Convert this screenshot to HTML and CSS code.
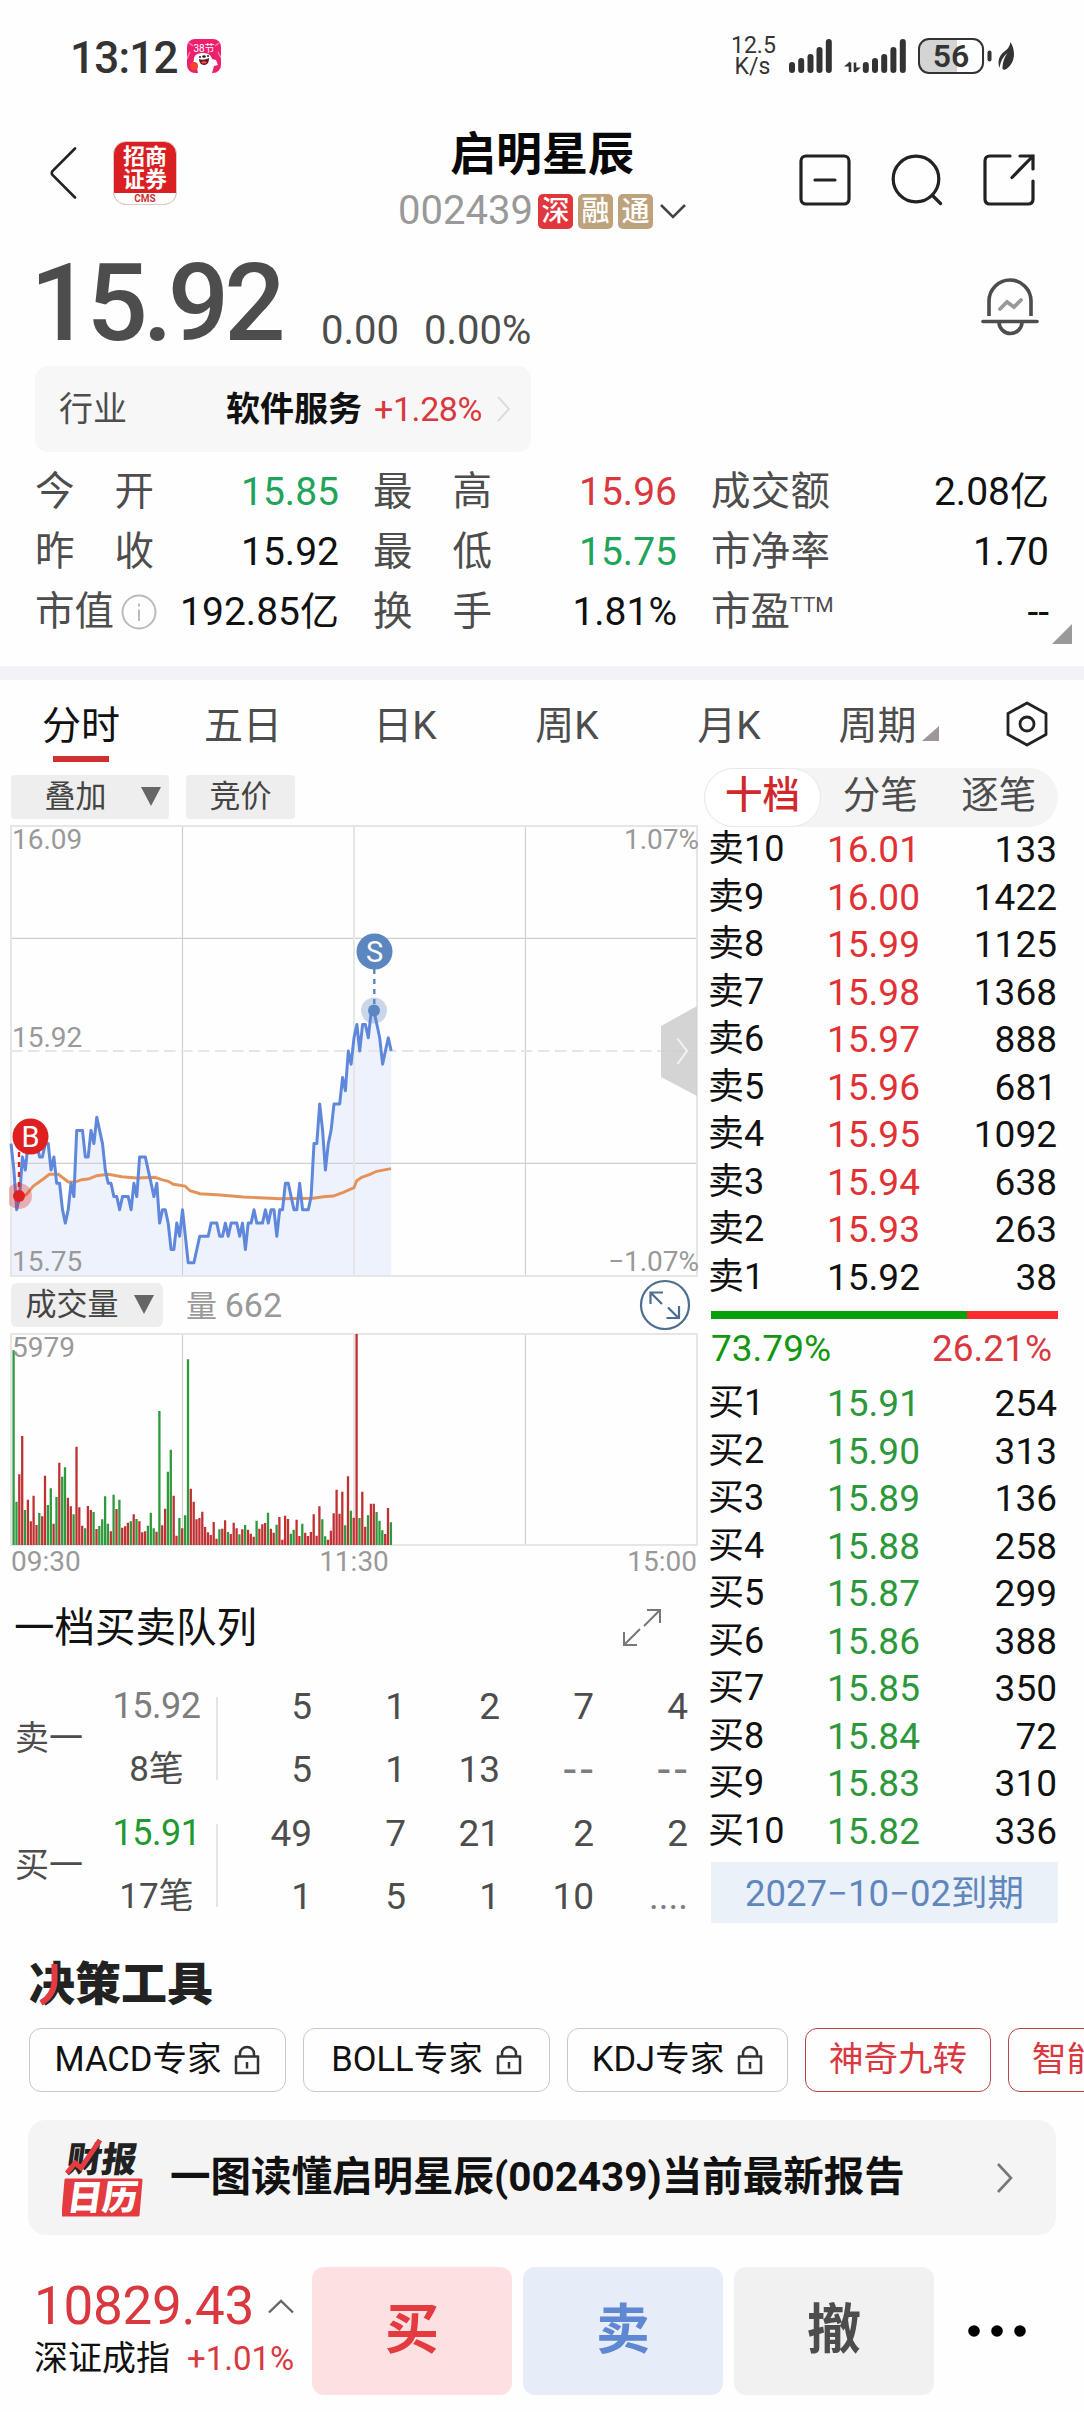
FILE: index.html
```html
<!DOCTYPE html>
<html lang="zh-CN">
<head>
<meta charset="utf-8">
<title>启明星辰 002439</title>
<link rel="stylesheet" href="styles.css">
</head>
<body>
<div class="status">
  <span class="clock">13:12</span>
  <svg class="promo" width="34" height="34" viewBox="0 0 34 34">
    <rect width="34" height="34" rx="8" fill="#ef1f6e"/>
    <path d="M3 13L0 20M31 13l3 6M2 4l4 3M32 4l-4 3" stroke="#ff7fae" stroke-width="1.5"/>
    <text x="17" y="13" text-anchor="middle" font-size="10" fill="#fff">38节</text>
    <path d="M7 20c0-4 4-6 9-6s8 2 9 6l4 1 2 5-4 1-2 7H11l-1-5-4-4z" fill="#fff"/>
    <path d="M12 20c3 1 6 1 10-1 0 5-2 7-5 7s-5-3-5-6z" fill="#6d1420"/>
    <path d="M14 23c2-1 4-1 6 0-1 2-5 2-6 0z" fill="#f4504f"/>
    <circle cx="13" cy="18" r="1" fill="#222"/><ellipse cx="17" cy="17.500" rx="1.800" ry="1.200" fill="#222"/><circle cx="21" cy="17" r="1" fill="#222"/>
    <circle cx="7" cy="27" r="4" fill="#f2452f"/>
  </svg>
  <div class="status-right">
    <div class="speed">12.5<br>K/s</div>
    <svg class="signals" width="118" height="36" viewBox="0 0 118 36">
      <g stroke="#333" stroke-width="6" stroke-linecap="round">
        <path d="M3 27v5M12.200 23v9M21.500 19v13M30.500 12v20M39.800 4v28"/>
        <path d="M76.800 27v5M86 23v9M95.200 19v13M104.400 12v20M113.800 4v28"/>
      </g>
      <path d="M61 24.500v9.500M66 24.500v9.500" stroke="#333" stroke-width="2.600"/>
      <path d="M55 28.500l6-5v5zM72 29.500l-6 5v-5z" fill="#333"/>
    </svg>
    <div class="battery"><span>56</span></div>
    <svg class="nub" width="28" height="30" viewBox="0 0 28 30">
      <path d="M2.500 11.500v7" stroke="#333" stroke-width="4" stroke-linecap="round"/>
      <path d="M23.500 1c6 10 4 21-4 27-2 1-3 1-4 0 0-7 2-12 5-16-5 4-7 9-8 15-2-5-1-11 3-15 4-3 7-5 8-11z" fill="#333"/>
    </svg>
  </div>
</div>

<header class="top">
  <div class="top-side">
    <svg class="back" width="27" height="52" viewBox="0 0 27 52"><path d="M25 1.500L2.500 24q-1.500 2 0 4L25 50.500" fill="none" stroke="#222" stroke-width="2.600" stroke-linecap="round"/></svg>
    <div class="broker"><div class="broker-name">招商<br>证券</div><div class="broker-code">CMS</div></div>
  </div>
  <div class="top-title">
    <h1>启明星辰</h1>
    <div class="code"><span>002439</span><i class="tag tag-red">深</i><i class="tag">融</i><i class="tag">通</i>
      <svg width="26" height="16" viewBox="0 0 26 16"><path d="M1 2l12 12L25 2" fill="none" stroke="#444" stroke-width="2.500"/></svg>
    </div>
  </div>
  <div class="top-actions">
    <svg width="52" height="52" viewBox="0 0 52 52" fill="none" stroke="#222" stroke-width="3.200" stroke-linecap="round"><rect x="2" y="2" width="48" height="48" rx="5"/><path d="M16 26h20"/></svg>
    <svg width="52" height="52" viewBox="0 0 52 52" fill="none" stroke="#222" stroke-width="3.200" stroke-linecap="round"><circle cx="25" cy="25" r="22.800"/><path d="M41.500 41.500l8 8"/></svg>
    <svg width="52" height="52" viewBox="0 0 52 52" fill="none" stroke="#222" stroke-width="3.200" stroke-linecap="round"><path d="M27 2H7Q2 2 2 7v38q0 5 5 5h38q5 0 5-5V27M37 2h13v13M50 2L29 23.500"/></svg>
  </div>
</header>

<section class="quote">
  <span class="price">15.92</span><span class="chg">0.00</span><span class="chg">0.00%</span>
  <svg class="bell" width="58" height="58" viewBox="0 0 58 58" fill="none" stroke="#4d4d4d" stroke-width="3.600">
    <path d="M8 38V23a21 21 0 0 1 42 0v15"/><path d="M2 43.500h54" stroke-linecap="round"/><path d="M18 44a11.500 11.500 0 0 0 23 0"/><path d="M19 31l7-7 7 5 7-7" stroke="#999" stroke-width="3.800" stroke-linecap="round"/>
  </svg>
</section>

<section class="industry">
  <span class="ind-label">行业</span><b>软件服务</b><span class="red ind-chg">+1.28%</span>
  <svg width="14" height="26" viewBox="0 0 14 26"><path d="M1 1l11 12L1 25" fill="none" stroke="#ddd" stroke-width="2"/></svg>
</section>

<section class="stats">
  <div><span class="lab"><i>今</i><i>开</i></span><span class="green">15.85</span></div>
  <div><span class="lab"><i>最</i><i>高</i></span><span class="red">15.96</span></div>
  <div><span class="lab"><i>成</i><i>交</i><i>额</i></span><span>2.08亿</span></div>
  <div><span class="lab"><i>昨</i><i>收</i></span><span>15.92</span></div>
  <div><span class="lab"><i>最</i><i>低</i></span><span class="green">15.75</span></div>
  <div><span class="lab"><i>市</i><i>净</i><i>率</i></span><span>1.70</span></div>
  <div><span class="lab cap"><i>市值</i><svg width="36" height="36" viewBox="0 0 36 36" fill="none" stroke="#bbb" stroke-width="2"><circle cx="18" cy="18" r="16.500"/><path d="M18 15.500V27M18 9.500v3"/></svg></span><span>192.85亿</span></div>
  <div><span class="lab"><i>换</i><i>手</i></span><span>1.81%</span></div>
  <div><span class="lab"><i>市盈<sup>TTM</sup></i></span><span>--</span></div>
  <svg class="corner" width="20" height="20" viewBox="0 0 20 20"><path d="M20 0v20H0z" fill="#999"/></svg>
</section>

<nav class="tabs">
  <a class="on">分时</a><a>五日</a><a>日K</a><a>周K</a><a>月K</a>
  <a class="period">周期<svg width="17" height="17" viewBox="0 0 17 17"><path d="M17 1v15H0z" fill="#9f9797"/></svg></a>
  <svg class="gear" width="42" height="46" viewBox="0 0 42 46" fill="none" stroke="#222" stroke-width="2.800" stroke-linejoin="round"><path d="M21 2l19 10.500v21L21 44 2 33.500v-21z"/><circle cx="21" cy="23" r="7"/></svg>
</nav>

<main class="market">
  <div class="charts">
    <div class="tools">
      <button class="wide">叠加<svg width="20" height="20" viewBox="0 0 20 20"><path d="M0 0h20L10 19z" fill="#666"/></svg></button>
      <button>竞价</button>
    </div>
    <svg class="chart" width="693" height="454" viewBox="9 824 693 454">
      <path id="area" fill="#eef2fd"/>
      <g fill="none" stroke="#cfcfcf" stroke-width="1.200"><path d="M11 938.300H697M11 1163.300H697M182.500 826V1276M525.500 826V1276"/></g>
      <g fill="none" stroke="#e6e6e6" stroke-width="2"><rect x="11" y="826" width="686" height="450"/><path d="M354 826V1276"/><path d="M11 1051H697" stroke-dasharray="11.500 5.500"/></g>
      <g class="axis"><text x="12" y="849">16.09</text><text x="12" y="1047">15.92</text><text x="12" y="1271">15.75</text><text x="699" y="849" text-anchor="end">1.07%</text><text x="699" y="1271" text-anchor="end">−1.07%</text></g>
      <path d="M19 1196.300L26 1195l7.300-9 10-7 6-4.700h9l10 7.700h6.700l6.700-2.300 6.600-.7 8.400-3.300 11.600-1.400 13.400 2.400 15 1.300 18.300-.7 6.700 2.400 6.600 1.600 5 3 11.700 1.700 5 4.700 10 3 20 1.300 23.300 2 36.700 1.700 33.300-.4 10-1.600 10-.7 10-3.700 10.700-4.600 2.700-7 5-3.400 8.300-3 6.700-3 14.300-2.700" fill="none" stroke="#e3935a" stroke-width="2.900"/>
      <path id="line" fill="none" stroke="#5f87dc" stroke-width="3" stroke-linejoin="round"/>
      <path d="M374.300 969v35" stroke="#5b86bf" stroke-width="2.400" stroke-dasharray="5 5"/>
      <circle cx="374" cy="1010.500" r="13" fill="#5b86bf" opacity=".32"/><circle cx="374" cy="1010.500" r="6" fill="#5b86bf"/>
      <circle cx="374.500" cy="951.500" r="18" fill="#5b86bf"/><text class="mark" x="374.500" y="961.500">S</text>
      <path d="M19 1152v38" stroke="#de2021" stroke-width="2.400" stroke-dasharray="5 5"/>
      <circle cx="19" cy="1196" r="13" fill="#de2021" opacity=".32"/><circle cx="19" cy="1196" r="6" fill="#de2021"/>
      <circle cx="30.500" cy="1136.500" r="18" fill="#de2021"/><text class="mark" x="30.500" y="1146.500">B</text>
      <path d="M697 1006v90l-36-19v-51z" fill="#cdcdcd" opacity=".85"/><path d="M677.500 1038.500l9.500 12.500-9.500 13" fill="none" stroke="#f3f3f3" stroke-width="2"/>
    </svg>
    <div class="volhead">
      <button class="vol">成交量<svg width="20" height="20" viewBox="0 0 20 20"><path d="M0 0h20L10 19z" fill="#666"/></svg></button>
      <span>量 <em>662</em></span>
      <svg class="full" width="52" height="52" viewBox="0 0 52 52" fill="none" stroke="#4c6d8f" stroke-width="2.200"><circle cx="26" cy="26" r="24"/><path d="M11.500 25V13.500H24M12 14l11 11M40 27v12H27.500M29 28.500l10.500 10.500"/></svg>
    </div>
    <svg class="chart" width="693" height="216" viewBox="9 1332 693 216">
      <g fill="none" stroke="#cfcfcf" stroke-width="1.200"><path d="M182.500 1334V1545M525.500 1334V1545"/></g>
      <g fill="none" stroke="#e6e6e6" stroke-width="2"><rect x="11" y="1334" width="686" height="211"/><path d="M354 1334V1545"/></g>
      <path id="up" stroke="#c13134" stroke-width="2.300"/><path id="down" stroke="#2f9a3c" stroke-width="2.300"/>
      <g class="axis"><text x="12" y="1357">5979</text></g>
    </svg>
    <div class="times"><span>09:30</span><span>11:30</span><span>15:00</span></div>
    <div class="queue-head"><span>一档买卖队列</span><svg width="40" height="40" viewBox="0 0 40 40" fill="none" stroke="#777" stroke-width="2"><path d="M25 2h13v13M38 2L22 18M2 24v13h13M2 37l16-16"/></svg></div>
    <div class="queue">
      <div class="qname">卖一</div><div class="qp"><span class="gray">15.92</span><span>8笔</span></div>
      <div class="qv"><span>5</span><span>1</span><span>2</span><span>7</span><span>4</span><span>5</span><span>1</span><span>13</span><span class="gray dash">--</span><span class="gray dash">--</span></div>
    </div>
    <div class="queue">
      <div class="qname">买一</div><div class="qp"><span class="g2">15.91</span><span>17笔</span></div>
      <div class="qv"><span>49</span><span>7</span><span>21</span><span>2</span><span>2</span><span>1</span><span>5</span><span>1</span><span>10</span><span class="gray">....</span></div>
    </div>
  </div>

  <aside class="book">
    <div class="pill"><span class="sel">十档</span><span>分笔</span><span>逐笔</span></div>
    <div class="rows sell">
      <div><span>卖10</span><span>16.01</span><span>133</span></div>
      <div><span>卖9</span><span>16.00</span><span>1422</span></div>
      <div><span>卖8</span><span>15.99</span><span>1125</span></div>
      <div><span>卖7</span><span>15.98</span><span>1368</span></div>
      <div><span>卖6</span><span>15.97</span><span>888</span></div>
      <div><span>卖5</span><span>15.96</span><span>681</span></div>
      <div><span>卖4</span><span>15.95</span><span>1092</span></div>
      <div><span>卖3</span><span>15.94</span><span>638</span></div>
      <div><span>卖2</span><span>15.93</span><span>263</span></div>
      <div class="flat"><span>卖1</span><span>15.92</span><span>38</span></div>
    </div>
    <div class="ratio"><i style="width:73.79%"></i></div>
    <div class="pct"><span>73.79%</span><span class="red">26.21%</span></div>
    <div class="rows buy">
      <div><span>买1</span><span>15.91</span><span>254</span></div>
      <div><span>买2</span><span>15.90</span><span>313</span></div>
      <div><span>买3</span><span>15.89</span><span>136</span></div>
      <div><span>买4</span><span>15.88</span><span>258</span></div>
      <div><span>买5</span><span>15.87</span><span>299</span></div>
      <div><span>买6</span><span>15.86</span><span>388</span></div>
      <div><span>买7</span><span>15.85</span><span>350</span></div>
      <div><span>买8</span><span>15.84</span><span>72</span></div>
      <div><span>买9</span><span>15.83</span><span>310</span></div>
      <div><span>买10</span><span>15.82</span><span>336</span></div>
    </div>
    <div class="expire">2027−10−02到期</div>
  </aside>
</main>

<section class="decide">
  <h2>决策工具<svg width="46" height="46" viewBox="0 0 46 46"><path d="M25.500 2v17Q25 33 12 41" fill="none" stroke="#e33b40" stroke-width="6"/></svg></h2>
  <div class="chips">
    <span class="c1">MACD专家<svg class="lock" width="26" height="30" viewBox="0 0 26 30"><path d="M2 11.500h22V28H2zM6 11V8.500a7 6.500 0 0 1 14 0V11M13 17v6.500"/></svg></span>
    <span class="c2">BOLL专家<svg class="lock" width="26" height="30" viewBox="0 0 26 30"><path d="M2 11.500h22V28H2zM6 11V8.500a7 6.500 0 0 1 14 0V11M13 17v6.500"/></svg></span>
    <span class="c3">KDJ专家<svg class="lock" width="26" height="30" viewBox="0 0 26 30"><path d="M2 11.500h22V28H2zM6 11V8.500a7 6.500 0 0 1 14 0V11M13 17v6.500"/></svg></span>
    <span class="hot">神奇九转</span>
    <span class="hot">智能选股</span>
  </div>
</section>

<section class="report">
  <svg width="82" height="78" viewBox="0 0 82 78">
    <g class="cal"><text x="0" y="33" transform="translate(8 0) skewX(-8)" fill="#222">财报</text>
    <path d="M4 41h75l-3 35H1z" fill="#e33b40" stroke="#e33b40" stroke-width="3" stroke-linejoin="round"/>
    <text x="0" y="71" transform="translate(14 0) skewX(-8)" fill="#fff">日历</text></g>
    <path d="M5 34l8-10 6 5L38 1" fill="none" stroke="#e33b40" stroke-width="5"/>
  </svg>
  <b>一图读懂启明星辰(002439)当前最新报告</b>
  <svg class="go" width="18" height="32" viewBox="0 0 18 32"><path d="M2 2l13 14L2 30" fill="none" stroke="#777" stroke-width="2.600"/></svg>
</section>

<footer class="bar">
  <div class="index">
    <div class="idx-val">10829.43<svg width="26" height="15" viewBox="0 0 26 15"><path d="M1 13.500L13 2l12 11.500" fill="none" stroke="#666" stroke-width="2.400"/></svg></div>
    <div class="idx-name">深证成指<span>+1.01%</span></div>
  </div>
  <button class="b-buy">买</button><button class="b-sell">卖</button><button class="b-cancel">撤</button>
  <svg class="more" width="60" height="14" viewBox="0 0 60 14"><circle cx="7" cy="7" r="5.800"/><circle cx="30" cy="7" r="5.800"/><circle cx="53" cy="7" r="5.800"/></svg>
</footer>
<script src="chart.js"></script>
</body>
</html>
```

FILE: styles.css
```css
* { box-sizing: border-box; }
body {
  margin: 0;
  width: 1084px;
  height: 2412px;
  overflow: hidden;
  background: #fefefe;
  color: #111;
  font-family: Roboto, "Noto Sans CJK SC", sans-serif;
  font-size: 39px;
  line-height: 1.2;
}
i, em { font-style: normal; }
svg { display: block; flex: none; }
button { border: 0; padding: 0; font: inherit; color: inherit; }
.red { color: #d9393e; }
.green { color: #21a35a; }
.g2 { color: #21992f; }
.gray { color: #7d7d7d; }

.status { display: flex; align-items: center; height: 112px; padding-left: 70px; color: #333; }
.clock { font-size: 44px; font-weight: 500; line-height: 50px; letter-spacing: -0.8px; width: 117px; padding-top: 3px; }
.status-right { display: flex; align-items: center; margin-left: auto; margin-right: 69px; }
.speed { width: 43px; font-size: 23px; line-height: 21px; margin-right: 15px; white-space: nowrap; text-align: center; }
.battery { display: flex; align-items: center; justify-content: center; width: 66px; height: 36px; margin-left: 11px; border: 2.500px solid #333; border-radius: 11px; background: linear-gradient(90deg, #d4d4d4 60%, transparent 60%); font-size: 32px; font-weight: 600; line-height: 32px; }
.nub { margin-left: 3px; }

.top { display: grid; grid-template-columns: 1fr 300px 1fr; height: 138px; }
.top-side { display: flex; align-items: center; padding: 0 0 16px 50px; gap: 36px; }
.broker { width: 64px; height: 64px; border-radius: 13px; overflow: hidden; background: #d91f22; border: 1px solid #e2c9c9; }
.broker-name { height: 51px; padding-top: 3px; color: #fff; font-size: 22px; font-weight: 700; line-height: 23px; text-align: center; }
.broker-code { height: 12px; background: #fff; color: #c33; font-size: 10px; font-weight: 700; line-height: 11px; text-align: center; }
.top-title { display: flex; flex-direction: column; align-items: center; }
h1 { margin: 14px 0 0; font-size: 46px; line-height: 56px; font-weight: 700; color: #080808; }
.code { display: flex; align-items: center; height: 36px; margin-top: 11px; gap: 5px; color: #999; font-size: 40px; }
.tag { width: 35px; height: 35px; border-radius: 5px; background: #bda27b; color: #fff; font-size: 28px; line-height: 35px; text-align: center; font-weight: 500; }
.tag-red { background: #e0373c; }
.code svg { margin-left: 2px; }
.top-actions { display: flex; justify-content: flex-end; gap: 40px; padding: 42px 49px 0 0; }

.quote { display: flex; align-items: flex-start; height: 116px; padding-left: 30px; color: #4d4d4d; }
.price { font-size: 108px; line-height: 106px; font-weight: 500; letter-spacing: -5px; width: 291px; }
.chg { font-size: 40px; line-height: 48px; margin: 57px 25px 0 0; }
.bell { margin-left: auto; margin-right: 45px; margin-top: 28px; }

.industry { display: flex; align-items: center; width: 496px; height: 86px; margin-left: 35px; padding-left: 24px; border-radius: 13px; background: #f7f7f7; font-size: 34px; }
.ind-label { width: 167px; color: #4d4d4d; }
.industry b { font-weight: 700; }
.ind-chg { margin: 0 15px 0 12px; letter-spacing: -0.4px; }

.stats { display: grid; grid-template-columns: 304px 304px 338px; column-gap: 34px; grid-auto-rows: 60px; height: 214px; padding: 10px 35px 0; position: relative; }
.stats > div { display: flex; align-items: center; justify-content: space-between; white-space: nowrap; }
.lab { display: flex; justify-content: space-between; align-items: center; width: 119px; color: #4d4d4d; font-size: 39.500px; }
.lab.cap { width: 122px; }
.lab sup { font-size: 21px; line-height: 0; vertical-align: 13px; }
.corner { position: absolute; right: 12px; top: 172px; }

.tabs { display: flex; height: 102px; border-top: 14px solid #f2f3f6; color: #4d4d4d; }
.tabs a { width: 162px; display: flex; justify-content: center; padding-top: 16px; line-height: 60px; height: 82px; font-size: 39px; position: relative; }
.tabs .on { color: #111; }
.tabs .on::after { content: ""; position: absolute; left: 53px; bottom: 0; width: 56px; height: 6px; background: #d02f2f; }
.tabs .period { width: 157px; }
.period svg { margin: 29px 0 0 5px; }
.gear { margin: 21px 0 0 39px; }

.market { display: grid; grid-template-columns: 704px 354px; height: 1155px; }
.charts { min-width: 0; }
.tools { display: flex; gap: 17px; padding: 7px 0 0 11px; height: 56px; }
.tools button, .vol { display: flex; align-items: center; justify-content: center; height: 44px; border-radius: 4px; background: #eee; width: 109px; font-size: 31px; color: #444; }
.tools .wide { width: 158px; gap: 34px; padding-left: 25px; }
.chart { margin-left: 9px; }
.axis { font-size: 28px; fill: #999; }
.mark { font-size: 29px; fill: #fff; text-anchor: middle; }
.volhead { display: flex; align-items: center; height: 54px; padding-left: 11px; color: #999; font-size: 31px; }
.volhead span { margin-left: 23px; }
.volhead em { font-size: 34px; }
.charts .vol { width: 152px; gap: 15px; padding-left: 5px; border-radius: 6px; }
.full { margin-left: auto; margin-right: 13px; }
.times { display: flex; justify-content: space-between; padding: 0 7px 0 11px; font-size: 28px; line-height: 28px; height: 27px; color: #999; }
.queue-head { display: flex; align-items: center; justify-content: space-between; height: 106px; padding: 0 42px 0 14px; font-size: 40.500px; }
.queue { display: grid; grid-template-columns: 82px 121px 1fr; height: 127px; padding-left: 15px; align-items: center; color: #4d4d4d; font-size: 37px; }
.queue-head + .queue { margin-top: -6px; }
.qname { font-size: 34px; }
.qp { display: grid; grid-template-rows: 63px 63px; justify-items: center; align-items: center; border-right: 2px solid #e4e4e4; height: 83px; align-content: center; }
.qp span:first-child { font-size: 36px; letter-spacing: -0.5px; }
.qp span:last-child { font-size: 35px; }
.qv { display: grid; grid-template-columns: repeat(5, 94px); grid-template-rows: 63px 63px; align-items: center; justify-content: end; text-align: right; padding-right: 18px; }
.qv .dash { font-size: 46px; letter-spacing: 4px; margin-right: -3px; }

.pill { display: grid; grid-template-columns: 117px 1fr 1fr; height: 59px; border-radius: 30px; background: #f4f4f4; color: #4d4d4d; font-size: 37.500px; line-height: 55px; text-align: center; }
.sel { background: #fff; border: 1.500px solid #e8e8e8; border-radius: 30px; color: #d1282c; font-weight: 500; line-height: 53px; }
.rows { font-size: 37px; line-height: 47.500px; margin: -1px 1px 0 4px; }
.rows > div { display: grid; grid-template-columns: 119px 110px 1fr; height: 47.550px; white-space: nowrap; }
.rows span:first-child { font-size: 36px; }
.rows span:last-child { text-align: right; }
.sell span:nth-child(2) { color: #e13134; }
.sell .flat span { color: #111; }
.buy span:nth-child(2) { color: #2c983b; }
.ratio { height: 8px; margin: 9.500px 0 0 7px; background: #fb2b30; }
.ratio i { display: block; height: 8px; background: #08a008; }
.pct { display: flex; justify-content: space-between; margin-left: 7px; padding-right: 6px; height: 62px; line-height: 59px; font-size: 37px; color: #12970f; }
.buy { margin-top: -1px; }
.expire { height: 61px; margin: 7px 0 0 7px; background: #ebf1f8; color: #5f86bd; font-size: 36.500px; line-height: 63px; text-align: center; }

.decide { height: 197px; padding-left: 29px; overflow: hidden; }
h2 { position: relative; margin: 0; padding-top: 32px; height: 105px; font-size: 46px; line-height: 58px; font-weight: 900; color: #222; }
h2 svg { position: absolute; left: 0; top: 39px; }
.chips { display: flex; gap: 17px; overflow: hidden; }
.chips span { display: flex; flex: none; align-items: center; justify-content: center; gap: 13px; height: 64px; border: 1.500px solid #c8c8c8; border-radius: 12px; font-size: 34.500px; white-space: nowrap; }
.chips .c1 { width: 257px; }
.chips .c2 { width: 247px; }
.chips .c3 { width: 221px; }
.chips .hot { width: 186px; border-color: #bb4448; color: #d9393e; }
.lock { fill: none; stroke: #333; stroke-width: 2.500; stroke-linejoin: round; }

.report { display: flex; align-items: center; width: 1028px; height: 115px; margin-left: 28px; padding-left: 34px; border-radius: 18px; background: #f4f4f4; font-size: 40.500px; }
.cal { font-size: 35px; font-weight: 900; }
.report b { margin-left: 26px; white-space: nowrap; font-weight: 700; }
.go { margin-left: auto; margin-right: 42px; }

.bar { display: flex; gap: 11px; padding-top: 32px; }
.index { width: 301px; padding: 10px 0 0 34px; white-space: nowrap; }
.idx-val { display: flex; align-items: center; gap: 14px; font-size: 53px; line-height: 58px; color: #d9393e; letter-spacing: -0.3px; }
.idx-name { font-size: 34px; line-height: 44px; margin-top: 1px; }
.idx-name span { margin-left: 17px; color: #d9393e; font-size: 33px; }
.bar button { width: 200px; height: 128px; border-radius: 12px; font-size: 54px; font-weight: 700; }
.b-buy { background: #fde1e2; color: #e33b40; }
.b-sell { background: #e6edf9; color: #5f87d2; }
.b-cancel { background: #f1f1f1; color: #4d4d4d; }
.more { margin: 57px 0 0 22px; }
```

FILE: chart.js
```js
// Ticks (0.01 each) below the previous close, one value per minute.
const ticks = [7,9,12,11,8,9,7,6,6,7,8,8,7,7,9,8,10,10,12,13,12,10,11,6,6,6,8,8,6,7,5,6,7,9,10,10,11,11,12,11,11,11,12,10,11,8,8,8,9,10,11,10,13,12,12,13,15,15,13,14,12,14,16,16,16,15,14,14,14,14,13,13,13,14,14,13,14,13,13,13,14,13,15,13,13,12,13,13,13,12,13,12,12,14,12,12,10,10,11,12,12,10,12,12,12,11,7,7,4,6,9,7,6,4,4,4,2,3,0,1,-1,-2,0,-2,-2,-1,-3,-3,-2,-1,1,0,-1,0];
const step = 686 / 240;
const line = 'M' + ticks.map((t, i) => (11 + i * step).toFixed(1) + ' ' + (1051 + t * 13.235).toFixed(1)).join('L');
document.getElementById('line').setAttribute('d', line);
document.getElementById('area').setAttribute('d', line + 'V1276H11Z');

// Bar heights per minute in thirds of a pixel; g = falling, r = rising.
const vol = 'g584 g130 r212 r327 g105 r136 r71 r148 r60 g96 r86 r208 g120 g170 r64 g144 r247 g205 g233 r142 r116 g92 r295 r113 r58 g50 r117 r105 g99 r48 g57 g77 g146 g64 r41 g151 r108 g136 r52 r56 r67 g71 r92 g78 r71 r38 r41 g58 g97 g50 r40 g402 r59 r109 g220 g286 r148 r28 g81 r50 g89 g557 r169 r130 r77 r81 r100 r54 r38 r30 r69 r19 g47 r49 r74 g39 r33 r67 r50 g32 r47 g60 r46 r34 r25 g73 r49 r62 r66 g97 r49 r37 g61 r84 r16 r88 r78 g34 g46 r76 r27 g64 r37 r27 r39 r92 r28 r116 g77 g26 r16 r43 r95 r166 r94 r160 g59 r206 g103 r82 r633 g81 r160 r55 g89 r124 r124 g99 g73 g44 r33 r111 g68'.split(' ');
const bars = { g: '', r: '' };
vol.forEach((v, i) => {
  bars[v[0]] += `M${(13.6 + i * step).toFixed(1)} 1545v-${(v.slice(1) / 3).toFixed(1)}`;
});
document.getElementById('up').setAttribute('d', bars.r);
document.getElementById('down').setAttribute('d', bars.g);
```
